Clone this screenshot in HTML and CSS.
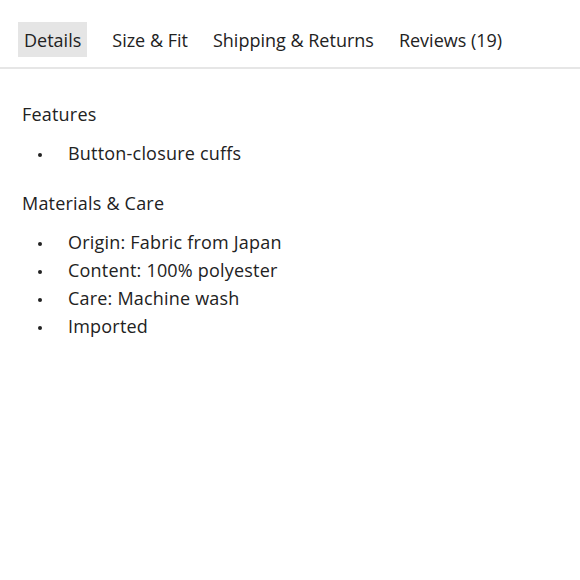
FILE: index.html
```html
<!DOCTYPE html>
<html>
<head>
<meta charset="utf-8">
<link rel="stylesheet" href="styles.css">
</head>
<body>
<nav class="tabs">
  <div class="tab active">Details</div>
  <div class="tab">Size &amp; Fit</div>
  <div class="tab">Shipping &amp; Returns</div>
  <div class="tab">Reviews (19)</div>
</nav>
<section class="content">
  <h3 class="heading">Features</h3>
  <ul class="list">
    <li>Button-closure cuffs</li>
  </ul>
  <h3 class="heading">Materials &amp; Care</h3>
  <ul class="list">
    <li>Origin: Fabric from Japan</li>
    <li>Content: 100% polyester</li>
    <li>Care: Machine wash</li>
    <li>Imported</li>
  </ul>
</section>
</body>
</html>
```
FILE: styles.css
```css
* { box-sizing: border-box; }
html, body { margin: 0; padding: 0; background: #fff; }
body {
  font-family: "Open Sans", sans-serif;
  color: #222;
  letter-spacing: 0.2px;
}
.tabs {
  display: flex;
  align-items: center;
  gap: 13px;
  padding: 22px 18px 10px;
  border-bottom: 2px solid #e6e6e6;
}
.tab {
  font-size: 18px;
  line-height: 35px;
  height: 35px;
  padding: 1px 6px 0;
  color: #222;
  letter-spacing: 0;
}
.tab.active {
  background: #e5e5e5;
  margin-right: 6px;
}
.content {
  padding: 35px 22px 0;
}
.heading {
  margin: 0;
  font-size: 18px;
  font-weight: 400;
  line-height: 20px;
}
.list {
  list-style: none;
  margin: 15px 0 26px;
  padding: 0;
  font-size: 18px;
  line-height: 28px;
}
.list li {
  display: flex;
  align-items: center;
}
.list li::before {
  content: "";
  width: 4px;
  height: 4px;
  border-radius: 50%;
  background: #222;
  margin: 3px 26px 0 16px;
}
```
